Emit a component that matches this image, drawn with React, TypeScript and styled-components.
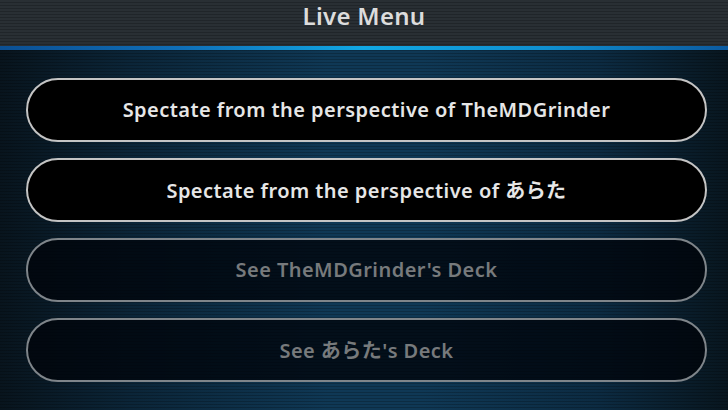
import React from "react";
import styled, { createGlobalStyle } from "styled-components";

const Global = createGlobalStyle`
  html, body { margin: 0; padding: 0; background: #0b1c2a; }
  * { box-sizing: border-box; }
`;

const Screen = styled.div`
  width: 728px;
  height: 410px;
  overflow: hidden;
  display: flex;
  flex-direction: column;
  font-family: "Noto Sans", "Noto Sans CJK JP", sans-serif;
  background:
    repeating-linear-gradient(to bottom, rgba(0,0,0,0) 0px, rgba(0,0,0,0) 2px, rgba(0,0,0,0.22) 2px, rgba(0,0,0,0.22) 3px),
    linear-gradient(to right, #08141d 0%, #0b2538 18%, #0f3855 45%, #0f3855 58%, #0c2b42 82%, #08161f 100%);
`;

const Header = styled.header`
  height: 46px;
  flex: none;
  display: flex;
  align-items: flex-start;
  justify-content: center;
  padding-top: 1px;
  background:
    repeating-linear-gradient(to bottom, rgba(255,255,255,0.025) 0px, rgba(255,255,255,0.025) 2px, rgba(0,0,0,0.12) 2px, rgba(0,0,0,0.12) 3px),
    #242a2f;
`;

const Title = styled.h1`
  margin: 0;
  font-size: 24px;
  font-weight: 600;
  color: #dcdcdc;
  letter-spacing: 0.3px;
  line-height: 30px;
`;

const AccentLine = styled.div`
  height: 4px;
  flex: none;
  background: linear-gradient(to right, #0b4f93 0%, #0f6fb8 25%, #11a8e4 50%, #0f8fd0 75%, #0b5aa0 100%);
`;

const List = styled.div`
  display: flex;
  flex-direction: column;
  gap: 16px;
  padding: 28px 21px 0 26px;
`;

const MenuButton = styled.button<{ $disabled?: boolean }>`
  height: 64px;
  width: 100%;
  border-radius: 32px;
  border: 2px solid ${(p) => (p.$disabled ? "#7f858a" : "#c4c4c4")};
  background: ${(p) => (p.$disabled ? "rgba(0, 4, 10, 0.78)" : "#000")};
  color: ${(p) => (p.$disabled ? "#777a7c" : "#e6e6e6")};
  font-family: inherit;
  font-size: 20px;
  font-weight: 600;
  letter-spacing: 0.45px;
  display: flex;
  align-items: center;
  justify-content: center;
  padding: 0 0 2px;
  cursor: ${(p) => (p.$disabled ? "default" : "pointer")};
`;

const items = [
  { label: "Spectate from the perspective of TheMDGrinder", disabled: false },
  { label: "Spectate from the perspective of あらた", disabled: false },
  { label: "See TheMDGrinder's Deck", disabled: true },
  { label: "See あらた's Deck", disabled: true },
];

export default function App() {
  return (
    <>
      <Global />
      <Screen>
        <Header>
          <Title>Live Menu</Title>
        </Header>
        <AccentLine />
        <List>
          {items.map((it) => (
            <MenuButton key={it.label} $disabled={it.disabled}>
              {it.label}
            </MenuButton>
          ))}
        </List>
      </Screen>
    </>
  );
}
